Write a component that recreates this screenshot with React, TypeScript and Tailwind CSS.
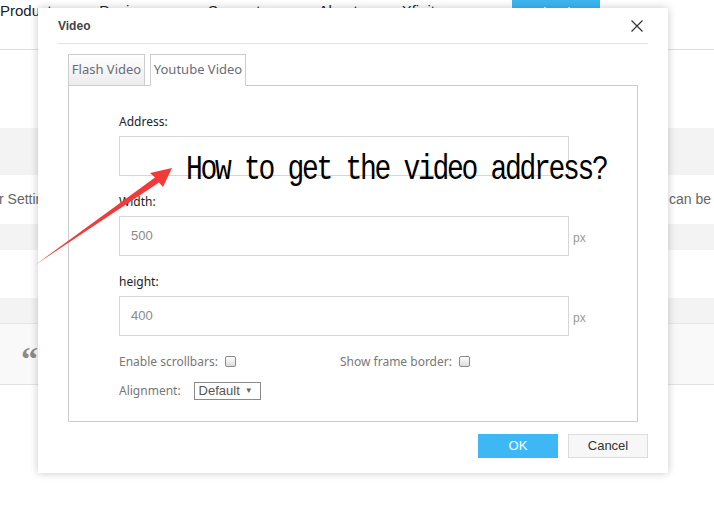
import React from "react";

const navItems = [
  { label: "Products", x: "ml-0" },
  { label: "Design", x: "ml-[40px]" },
  { label: "Support", x: "ml-[62px]" },
  { label: "About", x: "ml-[58px]" },
  { label: "Xfinity", x: "ml-[44px]" },
];

function Checkbox() {
  return (
    <span className="ml-[7px] inline-block h-[11px] w-[11px] rounded-[2px] border border-[#8a8a8a] bg-gradient-to-b from-white to-[#dcdcdc]" />
  );
}

function Field({ label, value }: { label: string; value?: string }) {
  return (
    <div>
      <div className="text-[12px] leading-[15px] text-[#222]">{label}</div>
      <div className="mt-[7px] flex items-center">
        <div className="flex h-[40px] w-[450px] items-center border border-[#d6d6d6] bg-white pl-[11px] font-['Liberation_Sans',Arial,sans-serif] text-[13px] text-[#8a8a8a]">
          {value}
        </div>
        {value && (
          <span className="ml-[4px] mt-[3px] font-['Liberation_Sans',Arial,sans-serif] text-[12px] text-[#999]">px</span>
        )}
      </div>
    </div>
  );
}

export default function App() {
  return (
    <div className="relative h-[515px] w-[714px] overflow-hidden bg-white font-['Noto_Sans','Liberation_Sans',sans-serif]">
      {/* page behind the dialog */}
      <header className="flex h-[50px] items-start border-b border-[#dedede] font-['Liberation_Sans',Arial,sans-serif] text-[15px] text-[#222]">
        {navItems.map((item) => (
          <span key={item.label} className={`${item.x} mt-[2px] leading-[18px]`}>
            {item.label}
          </span>
        ))}
        <span className="ml-auto mr-[114px] flex h-[30px] w-[88px] justify-center bg-[#3db6f0] pt-[2px] text-white">Sign in</span>
      </header>
      <div className="mt-[78px] h-[47px] bg-[#f3f3f3]" />
      <div className="flex h-[49px] items-center justify-between font-['Liberation_Sans',Arial,sans-serif] text-[14px] text-[#666]">
        <span className="-ml-[1px]">r Settings</span>
        <span className="mr-[3px]">ns can be</span>
      </div>
      <div className="h-[26px] bg-[#f3f3f3]" />
      <div className="h-[48px]" />
      <div className="h-[26px] border-b border-[#e6e6e6] bg-[#f3f3f3]" />
      <div className="h-[61px] border-b border-[#e2e2e2] bg-[#f9f9f9] pl-[21px] pt-[15px] font-['Liberation_Serif',serif] text-[34px] font-bold leading-[40px] text-[#8a8a8a]">
        “
      </div>

      {/* dialog */}
      <div className="absolute left-[38px] top-[8px] w-[630px] bg-white shadow-[0_0_8px_rgba(0,0,0,0.22)]">
        <div className="mx-[20px] flex h-[36px] items-center justify-between border-b border-[#e3e3e3]">
          <span className="font-['Liberation_Sans',Arial,sans-serif] text-[12px] font-bold text-[#444]">Video</span>
          <svg width="12" height="12" viewBox="0 0 12 12" className="mr-[5px]">
            <path d="M0.5 0.5 L11.5 11.5 M11.5 0.5 L0.5 11.5" stroke="#333" strokeWidth="1.2" fill="none" />
          </svg>
        </div>

        <div className="px-[30px] pt-[10px]">
          <div className="relative z-10 -mb-px flex gap-[5px] text-[13px] text-[#6c6c78]">
            <div className="flex h-[32px] w-[77px] items-center justify-center border border-[#cccccc] bg-gradient-to-b from-white to-[#ececec]">
              Flash Video
            </div>
            <div className="flex h-[32px] w-[96px] items-center justify-center border border-b-white border-[#cccccc] bg-white">
              Youtube Video
            </div>
          </div>
          <div className="border border-[#cccccc] pb-[21px] pl-[50px] pt-[28px]">
            <Field label="Address:" />
            <div className="mt-[18px]">
              <Field label="Width:" value="500" />
            </div>
            <div className="mt-[18px]">
              <Field label="height:" value="400" />
            </div>
            <div className="mt-[18px] flex h-[15px] items-center text-[12px] text-[#777]">
              <div className="flex w-[221px] items-center">
                Enable scrollbars:
                <Checkbox />
              </div>
              <div className="flex items-center">
                Show frame border:
                <Checkbox />
              </div>
            </div>
            <div className="mt-[13px] flex h-[18px] items-center text-[12px] text-[#777]">
              <span>Alignment:</span>
              <div className="ml-[13px] flex h-[18px] w-[67px] items-center border border-[#8a8a8a] pl-[4px] font-['Liberation_Sans',Arial,sans-serif] text-[13px] text-[#555]">
                Default
                <span className="ml-[5px] text-[8px] text-[#666]">▼</span>
              </div>
            </div>
          </div>
        </div>

        <div className="flex justify-end gap-[10px] px-[20px] pb-[15px] pt-[12px] font-['Liberation_Sans',Arial,sans-serif] text-[13px]">
          <button className="h-[24px] w-[80px] bg-[#3db8f5] text-white">OK</button>
          <button className="h-[24px] w-[80px] border border-[#dddddd] bg-[#f7f7f7] text-[#333]">Cancel</button>
        </div>
      </div>

      {/* annotation */}
      <svg className="pointer-events-none absolute left-0 top-0" width="714" height="515">
        <polygon points="35,265 155,177.5 150,173 172,168 163,187 159,182.5" fill="#f23a3a" />
      </svg>
      <div className="pointer-events-none absolute left-[186px] top-[157px] origin-bottom scale-y-[1.22] font-['Liberation_Mono',monospace] text-[28px] leading-[34px] tracking-[-2.3px] text-black">
        How to get the video address?
      </div>
    </div>
  );
}
